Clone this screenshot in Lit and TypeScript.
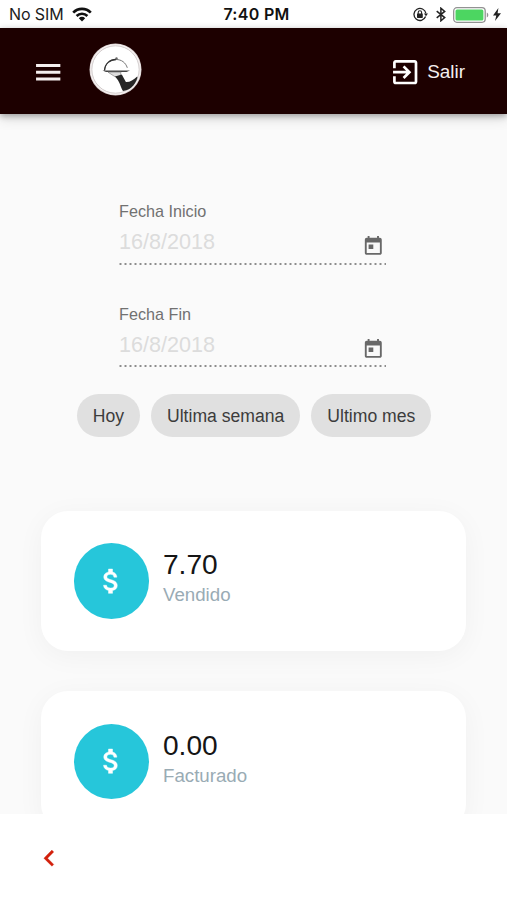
import { LitElement, html, css, svg } from "lit";
import { customElement, property } from "lit/decorators.js";

const icons: Record<string, string> = {
  menu: "M3 18.100h18v-2.200H3v2.200zm0-5h18v-2.200H3v2.200zm0-7.200v2.200h18V5.900H3z",
  exit: "M10.09 15.59L11.5 17l5-5-5-5-1.41 1.41L12.67 11H3v2h9.67l-2.58 2.59zM19 3H5c-1.11 0-2 .9-2 2v4h2V5h14v14H5v-4H3v4c0 1.1.89 2 2 2h14c1.1 0 2-.9 2-2V5c0-1.1-.9-2-2-2z",
  today: "M19 3h-1V1h-2v2H8V1H6v2H5c-1.11 0-1.99.9-1.99 2L3 19c0 1.1.89 2 2 2h14c1.1 0 2-.9 2-2V5c0-1.1-.9-2-2-2zm0 16H5V8h14v11zM7 10h5v5H7z",
  money: "M11.8 10.9c-2.27-.59-3-1.2-3-2.15 0-1.09 1.01-1.85 2.7-1.85 1.78 0 2.44.85 2.5 2.1h2.21c-.07-1.72-1.12-3.3-3.21-3.81V3h-3v2.16c-1.94.42-3.5 1.68-3.5 3.61 0 2.31 1.91 3.46 4.7 4.13 2.5.6 3 1.48 3 2.41 0 .69-.49 1.79-2.7 1.79-2.06 0-2.87-.92-2.98-2.1h-2.2c.12 2.19 1.76 3.42 3.68 3.83V21h3v-2.15c1.95-.37 3.5-1.5 3.5-3.55 0-2.84-2.43-3.81-4.7-4.4z",
  back: "M15.41 7.41L14 6l-6 6 6 6 1.41-1.41L10.83 12z",
};

@customElement("md-icon")
class MdIcon extends LitElement {
  @property() name = "";
  static styles = css`
    :host { display: block; width: 32.4px; height: 32.4px; flex: none; }
    svg { display: block; width: 100%; height: 100%; fill: currentColor; stroke: currentColor; stroke-width: var(--icon-stroke, 0); }
  `;
  render() {
    return html`<svg viewBox="0 0 24 24">${svg`<path d=${icons[this.name]}></path>`}</svg>`;
  }
}

@customElement("status-bar")
class StatusBar extends LitElement {
  static styles = css`
    :host {
      display: grid; grid-template-columns: 1fr auto 1fr; align-items: center;
      height: 28px; box-sizing: border-box; padding: 0 6px 0 9px;
      background: #fff; color: #1c1c1c; font: 16px/28px Inter, sans-serif;
    }
    .left, .right { display: flex; align-items: center; }
    .right { justify-content: flex-end; padding-top: 1px; }
    .carrier { line-height: 28px; letter-spacing: -0.1px; }
    .wifi { margin-left: 8px; }
    .time { font-weight: 600; letter-spacing: 0.3px; margin-left: 3px; line-height: 28px; color: #111; }
    .bluetooth { margin: 0 7px 0 8px; }
    .bolt { margin-left: 4px; }
    svg { display: block; flex: none; }
  `;
  render() {
    return html`
      <div class="left">
        <span class="carrier">No SIM</span>
        <svg class="wifi" width="20" height="15" viewBox="0 0 20 15">
          <g fill="none" stroke="#111" stroke-width="2.6">
            <path d="M1.2 5.6C6 .6 14 .6 18.8 5.6"></path>
            <path d="M4.6 9c3-3.1 7.8-3.1 10.8 0"></path>
          </g>
          <path fill="#111" d="M6.8 11.2c1.8-1.8 4.6-1.8 6.4 0L10 14.4z"></path>
        </svg>
      </div>
      <span class="time">7:40 PM</span>
      <div class="right">
        <svg width="15" height="15" viewBox="0 0 15 15">
          <path fill="none" stroke="#222" stroke-width="1.3" d="M12.6 9.6A6 6 0 1 1 12.9 6.4"></path>
          <path fill="#222" d="M10.9 6.4H15L13 9.2z"></path>
          <rect x="4" y="6.500" width="5.8" height="4.400" rx=".6" fill="#222"></rect>
          <path fill="none" stroke="#222" stroke-width="1.1" d="M5.2 7V5.5a1.7 1.7 0 0 1 3.4 0V7"></path>
        </svg>
        <svg class="bluetooth" width="10" height="15" viewBox="0 0 10 15">
          <path fill="none" stroke="#222" stroke-width="1.5" d="M.7 4.2l8 6.4-3.8 3.2V1.2l3.8 3.2-8 6.4"></path>
        </svg>
        <svg width="36" height="16" viewBox="0 0 36 16">
          <rect x=".7" y=".7" width="31.500" height="14.600" rx="3.200" fill="#fff" stroke="#929292" stroke-width="1.3"></rect>
          <rect x="2.500" y="2.500" width="27.900" height="11" rx="1.500" fill="#4cd661"></rect>
          <path d="M33.800 5.500v5c2-.8 2-4.200 0-5z" fill="#929292"></path>
        </svg>
        <svg class="bolt" width="8" height="13" viewBox="0 0 8 13">
          <path fill="#222" d="M5.400 0L0 7.400h3.300L2 13l6-7.800H4.600z"></path>
        </svg>
      </div>
    `;
  }
}

@customElement("date-field")
class DateField extends LitElement {
  @property() label = "";
  @property() value = "";
  static styles = css`
    :host { display: block; width: 267px; }
    .label { font-size: 16.2px; line-height: 20px; color: #717171; }
    .row {
      display: flex; justify-content: space-between; height: 41.500px;
    }
    .value { font-size: 21.6px; line-height: 42.500px; color: #dcdcdc; }
    md-icon { width: 22.6px; height: 22.6px; margin: 14px 1.500px 0 0; color: #686868; }
    .rule {
      height: 2px; margin-left: -1px;
      background: radial-gradient(circle, #8c8c8c 0.7px, #8c8c8c00 1.5px) 0 0 / 5px 2px repeat-x;
    }
  `;
  render() {
    return html`
      <div class="label">${this.label}</div>
      <div class="row"><span class="value">${this.value}</span><md-icon name="today"></md-icon></div>
      <div class="rule"></div>
    `;
  }
}

@customElement("stat-card")
class StatCard extends LitElement {
  @property() value = "";
  @property() label = "";
  static styles = css`
    :host {
      display: flex; box-sizing: border-box; height: 140px; padding: 32.500px 32.500px 0;
      border-radius: 27px; background: #fff; flex: none;
      box-shadow: 0 5px 28px rgba(0, 0, 0, 0.045);
    }
    .badge {
      display: flex; align-items: center; justify-content: center;
      width: 75.500px; height: 75.500px; border-radius: 50%; background: #26c6da; color: #fff;
      --icon-stroke: 0.35;
    }
    .text { margin-left: 14px; padding-top: 5px; }
    .value { font-size: 28.1px; line-height: 33px; color: #151515; }
    .label { font-size: 18.7px; line-height: 28px; color: #99abb4; }
  `;
  render() {
    return html`
      <div class="badge"><md-icon name="money"></md-icon></div>
      <div class="text">
        <div class="value">${this.value}</div>
        <div class="label">${this.label}</div>
      </div>
    `;
  }
}

@customElement("app-root")
class AppRoot extends LitElement {
  static styles = css`
    :host {
      display: flex; flex-direction: column; height: 900px; overflow: hidden;
      background: #fafafa; font-family: "Liberation Sans", Arial, sans-serif;
    }
    header {
      display: flex; align-items: center; flex: none; height: 86px; box-sizing: border-box;
      padding: 3px 42px 0 32px; background: #1d0000; color: #f5efef;
      box-shadow: 0 2px 6px rgba(0, 0, 0, 0.3), 0 5px 12px rgba(0, 0, 0, 0.12);
      position: relative;
    }
    .logo { display: block; margin: -7px 0 0 25px; }
    .logout { display: flex; align-items: center; gap: 6px; margin-left: auto; font-size: 18.9px; }
    .logout md-icon { color: #fff; }
    main { flex: 1; min-height: 0; overflow: hidden; display: flex; flex-direction: column; }
    .dates { display: flex; flex-direction: column; gap: 39px; padding: 87px 0 0 119px; }
    .chips { display: flex; gap: 11px; justify-content: center; margin: 26.500px 0 0 1px; }
    .chip {
      height: 43px; padding: 0 16px; border-radius: 22px; background: #e0e0e0;
      font-size: 17.6px; line-height: 44px; color: #3c3c3c; white-space: nowrap;
    }
    .cards { display: flex; flex-direction: column; gap: 40.500px; padding: 74px 41px 0; }
    footer {
      display: flex; align-items: center; flex: none; height: 86px; padding: 3px 0 0 33px;
      box-sizing: border-box; background: #fff; color: #d2200c; --icon-stroke: 0.2;
    }
  `;
  render() {
    return html`
      <status-bar></status-bar>
      <header>
        <md-icon name="menu"></md-icon>
        <svg class="logo" width="53" height="53" viewBox="0 0 53 53">
          <circle cx="26.500" cy="26.500" r="26" fill="#d8d0d0"></circle>
          <circle cx="26.500" cy="26.500" r="24.600" fill="#fff" stroke="#f8f4f4" stroke-width="1.200"></circle>
          <circle cx="26.500" cy="26.500" r="23.700" fill="#fff" stroke="#bdb5b5" stroke-width=".7"></circle>
          <path d="M15.500 27.500C16 20.500 21 16.500 27 16.500c5.500 0 9.600 3 11.300 8.300" fill="none" stroke="#777" stroke-width="1"></path>
          <path d="M15.500 27.500C16 20.500 21 16.500 27 16.500" fill="none" stroke="#333" stroke-width="1.300"></path>
          <circle cx="27.500" cy="15.400" r="1.200" fill="#666"></circle>
          <path d="M13.500 27.400h27.500l-3.500 1.500H17z" fill="#444"></path>
          <path d="M19 29.200l7 4.500 5-.2 1-4.300z" fill="#ddd" stroke="#888" stroke-width=".7"></path>
          <path d="M26 33.500l6.800-2 4.100 7.500c4 .2 7.500-1.800 11.300-5.500l.2 1.200c-1 4-3.100 7-6.100 9.800-2 2-5 3-8.300 3.600-2.600-4.300-3-9.500-8-14.600z" fill="#262626"></path>
        </svg>
        <div class="logout"><md-icon name="exit"></md-icon><span>Salir</span></div>
      </header>
      <main>
        <div class="dates">
          <date-field label="Fecha Inicio" value="16/8/2018"></date-field>
          <date-field label="Fecha Fin" value="16/8/2018"></date-field>
        </div>
        <div class="chips">
          ${["Hoy", "Ultima semana", "Ultimo mes"].map((t) => html`<span class="chip">${t}</span>`)}
        </div>
        <div class="cards">
          <stat-card value="7.70" label="Vendido"></stat-card>
          <stat-card value="0.00" label="Facturado"></stat-card>
        </div>
      </main>
      <footer><md-icon name="back"></md-icon></footer>
    `;
  }
}
